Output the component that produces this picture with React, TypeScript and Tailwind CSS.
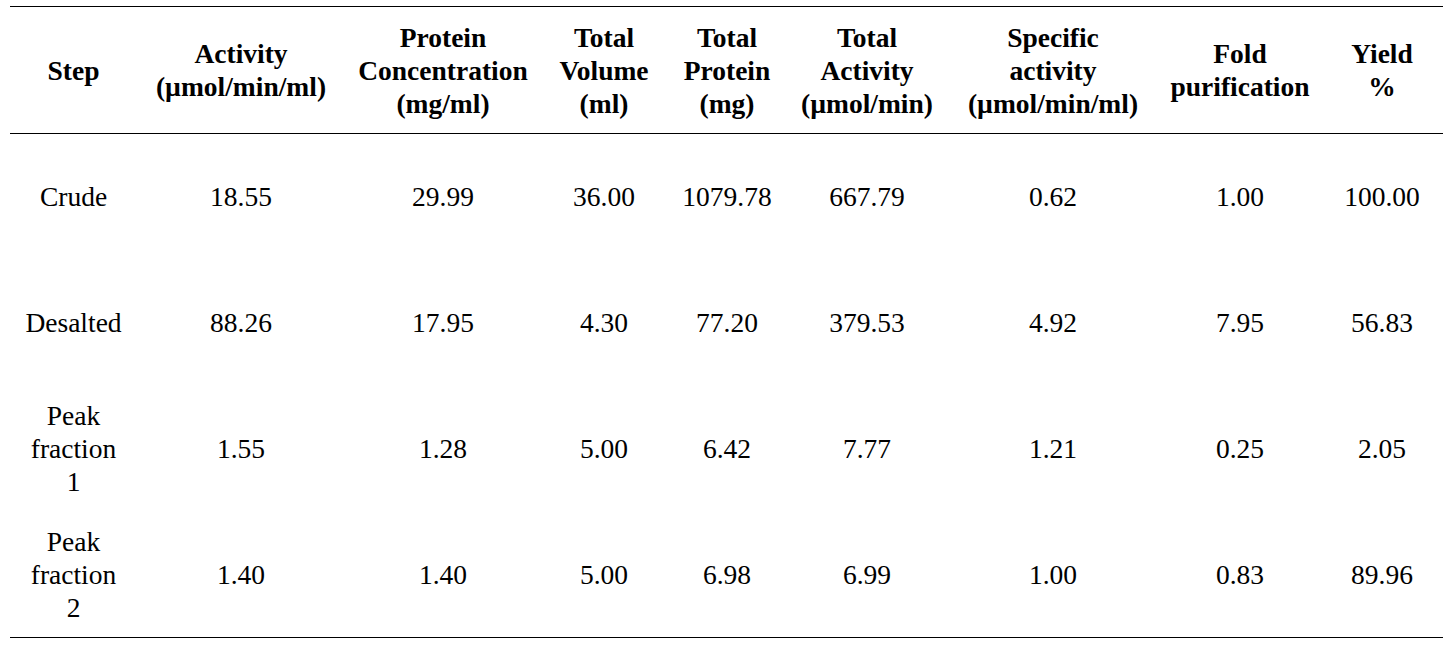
const columns = [
  { key: "step", width: "w-[127px]", label: ["Step"] },
  { key: "activity", width: "w-[208px]", label: ["Activity", "(µmol/min/ml)"] },
  { key: "conc", width: "w-[196px]", label: ["Protein", "Concentration", "(mg/ml)"] },
  { key: "volume", width: "w-[126px]", label: ["Total", "Volume", "(ml)"] },
  { key: "protein", width: "w-[120px]", label: ["Total", "Protein", "(mg)"] },
  { key: "totalActivity", width: "w-[160px]", label: ["Total", "Activity", "(µmol/min)"] },
  { key: "specific", width: "w-[212px]", label: ["Specific", "activity", "(µmol/min/ml)"] },
  { key: "fold", width: "w-[162px]", label: ["Fold", "purification"] },
  { key: "yield", width: "w-[122px]", label: ["Yield", "%"] },
];

const rows = [
  [["Crude"], "18.55", "29.99", "36.00", "1079.78", "667.79", "0.62", "1.00", "100.00"],
  [["Desalted"], "88.26", "17.95", "4.30", "77.20", "379.53", "4.92", "7.95", "56.83"],
  [["Peak", "fraction", "1"], "1.55", "1.28", "5.00", "6.42", "7.77", "1.21", "0.25", "2.05"],
  [["Peak", "fraction", "2"], "1.40", "1.40", "5.00", "6.98", "6.99", "1.00", "0.83", "89.96"],
] as const;

export default function App() {
  return (
    <div className="min-h-[647px] w-full bg-white pl-[10px] pt-[6px] font-serif text-black">
      <table className="w-[1433px] table-fixed border-collapse border-y border-black text-center font-[family-name:Liberation_Serif] text-[27.5px] leading-[33px]">
        <thead>
          <tr className="h-[127px] border-b border-black">
            {columns.map((col) => (
              <th key={col.key} className={`${col.width} align-middle font-bold`}>
                {col.label.map((line) => (
                  <div key={line}>{line}</div>
                ))}
              </th>
            ))}
          </tr>
        </thead>
        <tbody>
          {rows.map((row, i) => (
            <tr key={i} className="h-[126px]">
              {row.map((cell, j) => (
                <td key={j} className="align-middle font-normal">
                  {Array.isArray(cell)
                    ? cell.map((line) => <div key={line}>{line}</div>)
                    : cell}
                </td>
              ))}
            </tr>
          ))}
        </tbody>
      </table>
    </div>
  );
}
